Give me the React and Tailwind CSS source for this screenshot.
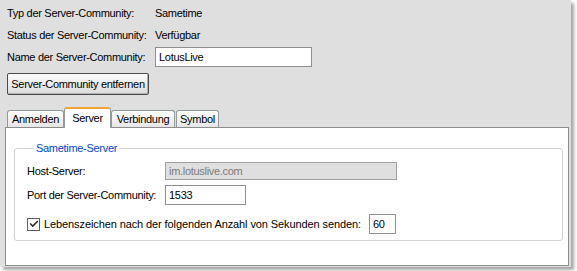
import { Check } from 'lucide-react';

const tabs = [
    { label: 'Anmelden', width: 'w-[57px]' },
    { label: 'Server', width: 'w-[47px]', active: true },
    { label: 'Verbindung', width: 'w-[64px]' },
    { label: 'Symbol', width: 'w-[43px] ml-px' },
];

function InfoRow({ label, children }) {
    return (
        <div className="flex h-[14px] items-center">
            <span className="w-[148px] shrink-0">{label}</span>
            <span>{children}</span>
        </div>
    );
}

export default function App() {
    return (
        <div
            className="h-[271px] w-[577px] bg-white text-[11px] leading-[14px] tracking-[-0.3px] text-black"
            style={{ fontFamily: '"Liberation Sans", Arial, sans-serif' }}
        >
            <div className="flex h-[267px] w-[571px] flex-col bg-[#dfdfdf] pl-[5px] pt-[6px] shadow-[3px_3px_3px_rgba(0,0,0,0.35)]">
                <div className="flex flex-col pl-[2px]">
                    <InfoRow label="Typ der Server-Community:">Sametime</InfoRow>
                    <div className="mt-[8px]">
                        <InfoRow label="Status der Server-Community:">
                            Verfügbar
                        </InfoRow>
                    </div>
                    <div className="mt-[5px] flex h-[20px] items-center">
                        <span className="w-[148px] shrink-0">
                            Name der Server-Community:
                        </span>
                        <div className="flex h-[20px] w-[157px] items-center border border-[#8f8f8f] bg-white px-[3px]">
                            LotusLive
                        </div>
                    </div>
                    <button className="mt-[6px] flex h-[22px] w-[142px] items-center justify-center rounded-[2px] border border-[#4a4a4a] bg-gradient-to-b from-[#fcfcfc] to-[#dcdcdc] shadow-[inset_-1px_-1px_0_#b0b0b0]">
                        Server-Community entfernen
                    </button>
                </div>

                <div className="mt-[12px] flex h-[20px] items-end pl-[2px]">
                    {tabs.map((tab) =>
                        tab.active ? (
                            <div
                                key={tab.label}
                                className={`relative z-10 -mb-px flex h-[21px] ${tab.width} items-center justify-center rounded-t-[3px] border border-b-0 border-[#919b9c] border-t-2 border-t-[#f2a33a] bg-white pb-[2px]`}
                            >
                                {tab.label}
                            </div>
                        ) : (
                            <div
                                key={tab.label}
                                className={`flex h-[17px] ${tab.width} items-center justify-center rounded-t-[3px] border border-b-0 border-[#919b9c] bg-gradient-to-b from-white to-[#e6e6e6]`}
                            >
                                {tab.label}
                            </div>
                        ),
                    )}
                </div>

                <div className="flex h-[139px] w-[564px] flex-col border border-[#8c8c8c] bg-white">
                    <fieldset className="ml-[8px] mr-[5px] mt-[13px] rounded-[3px] border border-[#d2d2d2] px-[12px] pb-[6px]">
                        <legend className="ml-[7px] px-[2px] leading-[14px] text-[#0046d5]">
                            Sametime-Server
                        </legend>
                        <div className="mt-[7px] flex h-[18px] items-center">
                            <span className="w-[138px] shrink-0">Host-Server:</span>
                            <div className="flex h-[18px] w-[232px] items-center border border-[#a0a0a0] bg-[#dfdfdf] px-[3px] text-[#7c7c7c]">
                                im.lotuslive.com
                            </div>
                        </div>
                        <div className="mt-[5px] flex h-[20px] items-center">
                            <span className="w-[138px] shrink-0">
                                Port der Server-Community:
                            </span>
                            <div className="flex h-[20px] w-[81px] items-center border border-[#8f8f8f] bg-white px-[3px]">
                                1533
                            </div>
                        </div>
                        <div className="mt-[9px] flex h-[20px] items-center">
                            <span className="flex h-[13px] w-[13px] shrink-0 items-center justify-center border border-[#5c5c5c] bg-white">
                                <Check
                                    className="h-[10px] w-[10px] text-[#333]"
                                    strokeWidth={4}
                                />
                            </span>
                            <span className="ml-[4px] w-[325px] shrink-0 tracking-[-0.1px]">
                                Lebenszeichen nach der folgenden Anzahl von
                                Sekunden senden:
                            </span>
                            <div className="flex h-[20px] w-[27px] items-center border border-[#8f8f8f] bg-white px-[3px]">
                                60
                            </div>
                        </div>
                    </fieldset>
                </div>
            </div>
        </div>
    );
}
